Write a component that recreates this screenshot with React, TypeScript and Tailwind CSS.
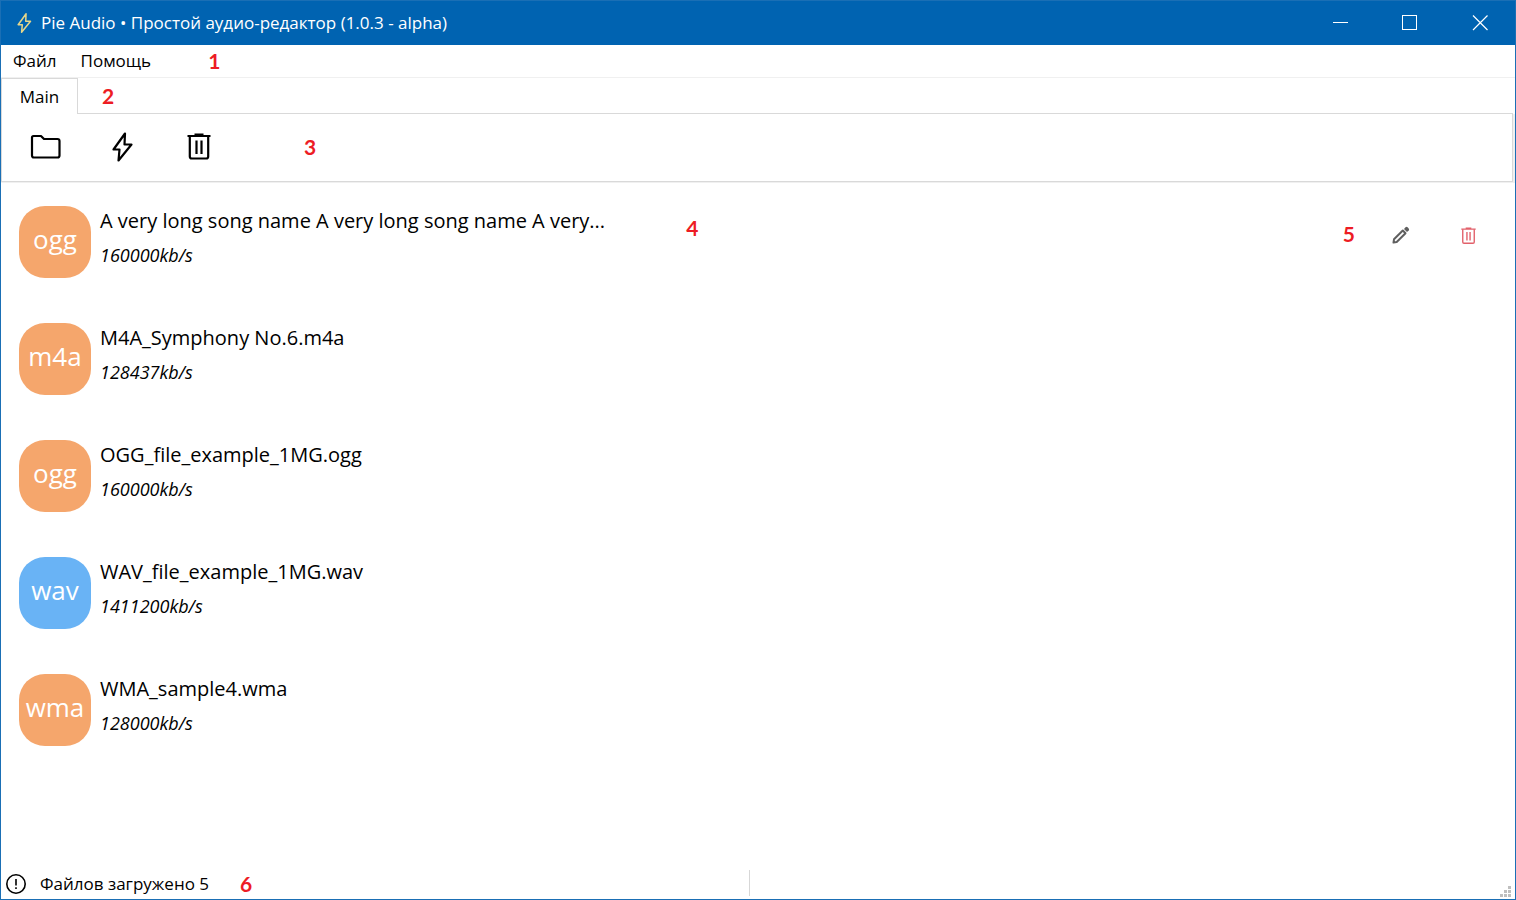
import React from 'react';

type AudioFile = { name: string; ext: string; bitrate: string; lossless?: boolean; active?: boolean };

const files: AudioFile[] = [
  { name: 'A very long song name A very long song name A very...', ext: 'ogg', bitrate: '160000kb/s', active: true },
  { name: 'M4A_Symphony No.6.m4a', ext: 'm4a', bitrate: '128437kb/s' },
  { name: 'OGG_file_example_1MG.ogg', ext: 'ogg', bitrate: '160000kb/s' },
  { name: 'WAV_file_example_1MG.wav', ext: 'wav', bitrate: '1411200kb/s', lossless: true },
  { name: 'WMA_sample4.wma', ext: 'wma', bitrate: '128000kb/s' },
];

function BoltIcon({ className }: { className: string }) {
  return (
    <svg className={className} viewBox="0 0 24 32" fill="none" stroke="currentColor" strokeWidth="2.200" strokeLinejoin="round">
      <path d="M15 2.500 L3.500 18.500 H9.500 L8.500 29.500 L21.500 13.500 H14.500 Z" />
    </svg>
  );
}

function FolderIcon() {
  return (
    <svg className="h-8 w-8" viewBox="0 0 32 32" fill="none" stroke="currentColor" strokeWidth="2.200" strokeLinejoin="round">
      <path d="M3.500 5 H11 L14 8 H27.500 Q29.500 8 29.500 10 V24.500 Q29.500 26.500 27.500 26.500 H4 Q2 26.500 2 24.500 V6.500 Q2 5 3.500 5 Z" />
    </svg>
  );
}

function TrashIcon({ className }: { className: string }) {
  return (
    <svg className={className} viewBox="0 0 24 28" fill="none" stroke="currentColor" strokeWidth="2.200">
      <path d="M0.500 3 H23.500 M7.500 1.600 H16.500" />
      <path d="M2.800 3 V23.500 Q2.800 25.500 4.800 25.500 H19.200 Q21.200 25.500 21.200 23.500 V3" />
      <path d="M9.500 7.500 V21 M14.500 7.500 V21" />
    </svg>
  );
}

function PencilIcon() {
  return (
    <svg className="h-5 w-5" viewBox="0 0 20 20" fill="none">
      <path d="M2.500 17.500 L3 14.300 L11.800 5.500 L14.500 8.200 L5.700 17 Z" stroke="currentColor" strokeWidth="2" strokeLinejoin="round" />
      <path d="M13 4 L14.500 2.300 Q15.500 1.400 16.600 2.300 L17.700 3.400 Q18.600 4.500 17.700 5.500 L16 7 Z" fill="currentColor" />
    </svg>
  );
}

function Marker({ children }: { children: React.ReactNode }) {
  return (
    <span className="font-['Lato',sans-serif] text-[21px] leading-6 font-bold text-[#ed1c24]">{children}</span>
  );
}

function TitleBar() {
  return (
    <header className="flex h-11 items-center bg-[#0063b1] text-white">
      <BoltIcon className="ml-[14px] h-[22px] w-[18px] text-[#e5d68a]" />
      <h1 className="ml-2 flex-1 text-[17px]">Pie Audio • Простой аудио-редактор (1.0.3 - alpha)</h1>
      <button type="button" aria-label="Свернуть" className="flex h-full w-[70px] items-center justify-center">
        <svg className="h-4 w-4" viewBox="0 0 16 16" stroke="currentColor">
          <path d="M1 7.500 H16" />
        </svg>
      </button>
      <button type="button" aria-label="Развернуть" className="flex h-full w-[70px] items-center justify-center">
        <svg className="h-4 w-4" viewBox="0 0 16 16" stroke="currentColor" fill="none">
          <rect x="0.500" y="0.500" width="14" height="14" />
        </svg>
      </button>
      <button type="button" aria-label="Закрыть" className="flex h-full w-[70px] items-center justify-center">
        <svg className="h-4 w-4" viewBox="0 0 16 16" stroke="currentColor" strokeWidth="1.200">
          <path d="M1 0.500 L15.500 15 M15.500 0.500 L1 15" />
        </svg>
      </button>
    </header>
  );
}

function FileRow({ file }: { file: AudioFile }) {
  return (
    <li className="flex h-[117px] items-start pt-[23px] pl-[18px]">
      <span
        className={`flex h-[72px] w-[72px] items-center justify-center rounded-[26px] pb-[5px] text-[26px] text-white ${
          file.lossless ? 'bg-[#69b3f5]' : 'bg-[#f5a66c]'
        }`}
      >
        {file.ext}
      </span>
      <div className="ml-[9px]">
        <p className="text-[20px] leading-[30px]">{file.name}</p>
        <p className="mt-[7px] text-[18px] leading-6 italic">{file.bitrate}</p>
      </div>
      {file.active && (
        <>
          <div className="mt-[10px] ml-[81px]">
            <Marker>4</Marker>
          </div>
          <div className="mt-4 mr-[39px] ml-auto flex items-center">
            <Marker>5</Marker>
            <button type="button" aria-label="Изменить" className="mt-[2px] ml-9 text-[#606060]">
              <PencilIcon />
            </button>
            <button type="button" aria-label="Удалить" className="mt-1 ml-[50px] text-[#e2606a]">
              <TrashIcon className="h-[18px] w-[15px]" />
            </button>
          </div>
        </>
      )}
    </li>
  );
}

export default function App() {
  return (
    <div className="flex min-h-screen flex-col border border-[#1a6fb5] bg-white font-['Open_Sans','Noto_Sans',sans-serif] text-black">
      <TitleBar />
      <nav className="flex h-[33px] items-center border-b border-[#f0f0f0] pl-3 text-[17px]">
        <button type="button">Файл</button>
        <button type="button" className="mr-[57px] ml-6">Помощь</button>
        <Marker>1</Marker>
      </nav>
      <div className="flex h-9 pr-[2px]" role="tablist">
        <button type="button" role="tab" aria-selected="true" className="w-[77px] border-x border-t border-[#d9d9d9] text-[17px]">
          Main
        </button>
        <div className="flex flex-1 items-center border-b border-[#d9d9d9] pl-6">
          <Marker>2</Marker>
        </div>
      </div>
      <div className="border-b border-[#f0f0f0] bg-[#f0f0f0] pr-[2px]">
        <div className="flex h-[68px] items-center border-x border-b border-[#d9d9d9] bg-white pb-[2px] pl-7">
          <button type="button" aria-label="Открыть">
            <FolderIcon />
          </button>
          <button type="button" aria-label="Конвертировать" className="ml-[48px]">
            <BoltIcon className="h-8 w-6" />
          </button>
          <button type="button" aria-label="Очистить" className="mr-[93px] ml-[53px]">
            <TrashIcon className="h-7 w-6" />
          </button>
          <Marker>3</Marker>
        </div>
      </div>
      <main className="flex-1">
        <ul>
          {files.map((file) => (
            <FileRow key={file.name} file={file} />
          ))}
        </ul>
      </main>
      <footer className="flex h-8 items-center">
        <div className="flex flex-1 items-center pt-[2px] pl-1 text-[17px]">
          <svg className="h-[22px] w-[22px]" viewBox="0 0 22 22" fill="none" stroke="currentColor" strokeWidth="1.600">
            <circle cx="11" cy="11" r="9.200" />
            <path d="M11 6 V12.500 M11 14.200 V16" />
          </svg>
          <span className="mr-[31px] ml-[13px]">Файлов загружено 5</span>
          <Marker>6</Marker>
        </div>
        <div className="h-[26px] w-px bg-[#d7d7d7]" />
        <div className="flex-1" />
        <div className="flex w-[22px] items-end justify-end self-stretch pr-1 pb-[2px]">
          <svg className="h-[11px] w-[11px]" viewBox="0 0 11 11" fill="#bfbfbf">
            <path d="M8 0h3v3h-3z M4 4h3v3h-3z M8 4h3v3h-3z M0 8h3v3h-3z M4 8h3v3h-3z M8 8h3v3h-3z" />
          </svg>
        </div>
      </footer>
    </div>
  );
}
